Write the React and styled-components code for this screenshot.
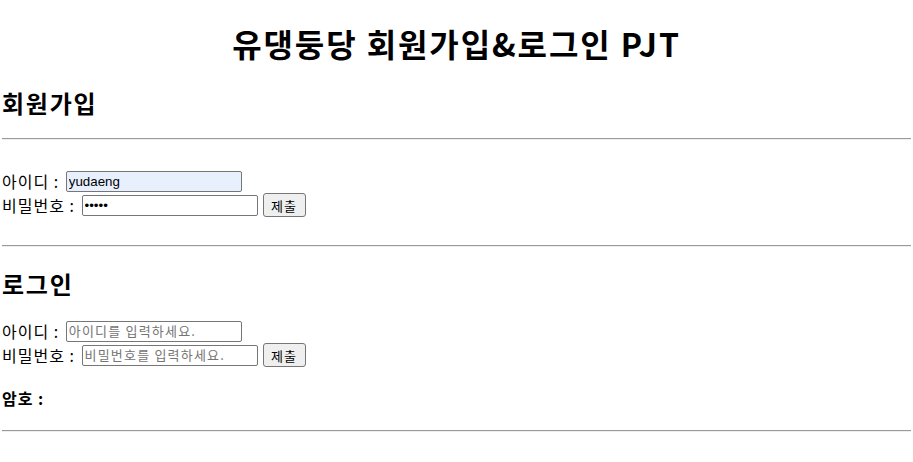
import React, { useState } from 'react';
import styled, { createGlobalStyle } from 'styled-components';

const GlobalStyle = createGlobalStyle`
    body {
        margin: 0 2px;
        background: #fff;
        color: #000;
        font-family: "Noto Sans CJK KR", "Noto Sans", sans-serif;
    }
`;

const Title = styled.h1`
    margin: 22px 0 0;
    font-size: 32px;
    line-height: 42px;
    font-weight: 700;
    letter-spacing: 1.9px;
    text-align: center;
`;

const SectionTitle = styled.h2`
    margin: ${(p) => p.$top}px 0 0;
    font-size: 24px;
    line-height: 32px;
    font-weight: 700;
    letter-spacing: 1.75px;
`;

const Divider = styled.hr`
    margin: ${(p) => p.$top}px 0 0;
    height: 0;
    border: 0;
    border-top: 1px solid #9a9a9a;
    border-bottom: 1px solid #eeeeee;
`;

const Form = styled.form`
    margin-top: ${(p) => p.$top}px;
    display: flex;
    flex-direction: column;
`;

const Row = styled.div`
    display: flex;
    align-items: center;
    height: 24px;
    font-size: 16px;
`;

const Label = styled.label`
    white-space: pre;
    line-height: 24px;
    letter-spacing: 1px;
`;

const Input = styled.input`
    box-sizing: border-box;
    width: 176px;
    height: 21px;
    margin: 0 0 0 2px;
    padding: 1px 2px;
    border: 1px solid #767676;
    border-radius: 2px;
    background: ${(p) => (p.$filled ? '#e8f0fe' : '#fff')};
    font-family: "Liberation Sans", Arial, sans-serif;
    font-size: 13.33px;
    color: #000;
    outline: none;

    &::placeholder {
        color: #757575;
        font-family: "Noto Sans CJK KR", sans-serif;
        font-size: 13px;
        letter-spacing: 1.2px;
    }
`;

const Button = styled.button`
    box-sizing: border-box;
    width: 43px;
    height: 24px;
    margin-left: 5px;
    padding: 0;
    border: 1px solid #767676;
    border-radius: 3px;
    background: #efefef;
    font-family: "Noto Sans CJK KR", sans-serif;
    font-size: 13px;
    letter-spacing: 1px;
    color: #000;
`;

const Result = styled.p`
    margin: 19px 0 0;
    font-size: 16px;
    line-height: 24px;
    font-weight: 700;
    letter-spacing: 1px;
`;

const App = () => {
    const [joinId, setJoinId] = useState('yudaeng');
    const [joinPw, setJoinPw] = useState('12345');
    const [loginId, setLoginId] = useState('');
    const [loginPw, setLoginPw] = useState('');

    return (
        <>
            <GlobalStyle />
            <Title>유댕둥당 회원가입&amp;로그인 PJT</Title>

            <SectionTitle $top={23}>회원가입</SectionTitle>
            <Divider $top={19} />
            <Form $top={29} onSubmit={(e) => e.preventDefault()}>
                <Row>
                    <Label>아이디 : </Label>
                    <Input $filled value={joinId} onChange={(e) => setJoinId(e.target.value)} />
                </Row>
                <Row>
                    <Label>비밀번호 : </Label>
                    <Input type="password" value={joinPw} onChange={(e) => setJoinPw(e.target.value)} />
                    <Button type="submit">제출</Button>
                </Row>
            </Form>
            <Divider $top={28} />

            <SectionTitle $top={21}>로그인</SectionTitle>
            <Form $top={19} onSubmit={(e) => e.preventDefault()}>
                <Row>
                    <Label>아이디 : </Label>
                    <Input placeholder="아이디를 입력하세요." value={loginId} onChange={(e) => setLoginId(e.target.value)} />
                </Row>
                <Row>
                    <Label>비밀번호 : </Label>
                    <Input type="password" placeholder="비밀번호를 입력하세요." value={loginPw} onChange={(e) => setLoginPw(e.target.value)} />
                    <Button type="submit">제출</Button>
                </Row>
            </Form>
            <Result>암호 : </Result>
            <Divider $top={20} />
        </>
    );
};

export default App;
